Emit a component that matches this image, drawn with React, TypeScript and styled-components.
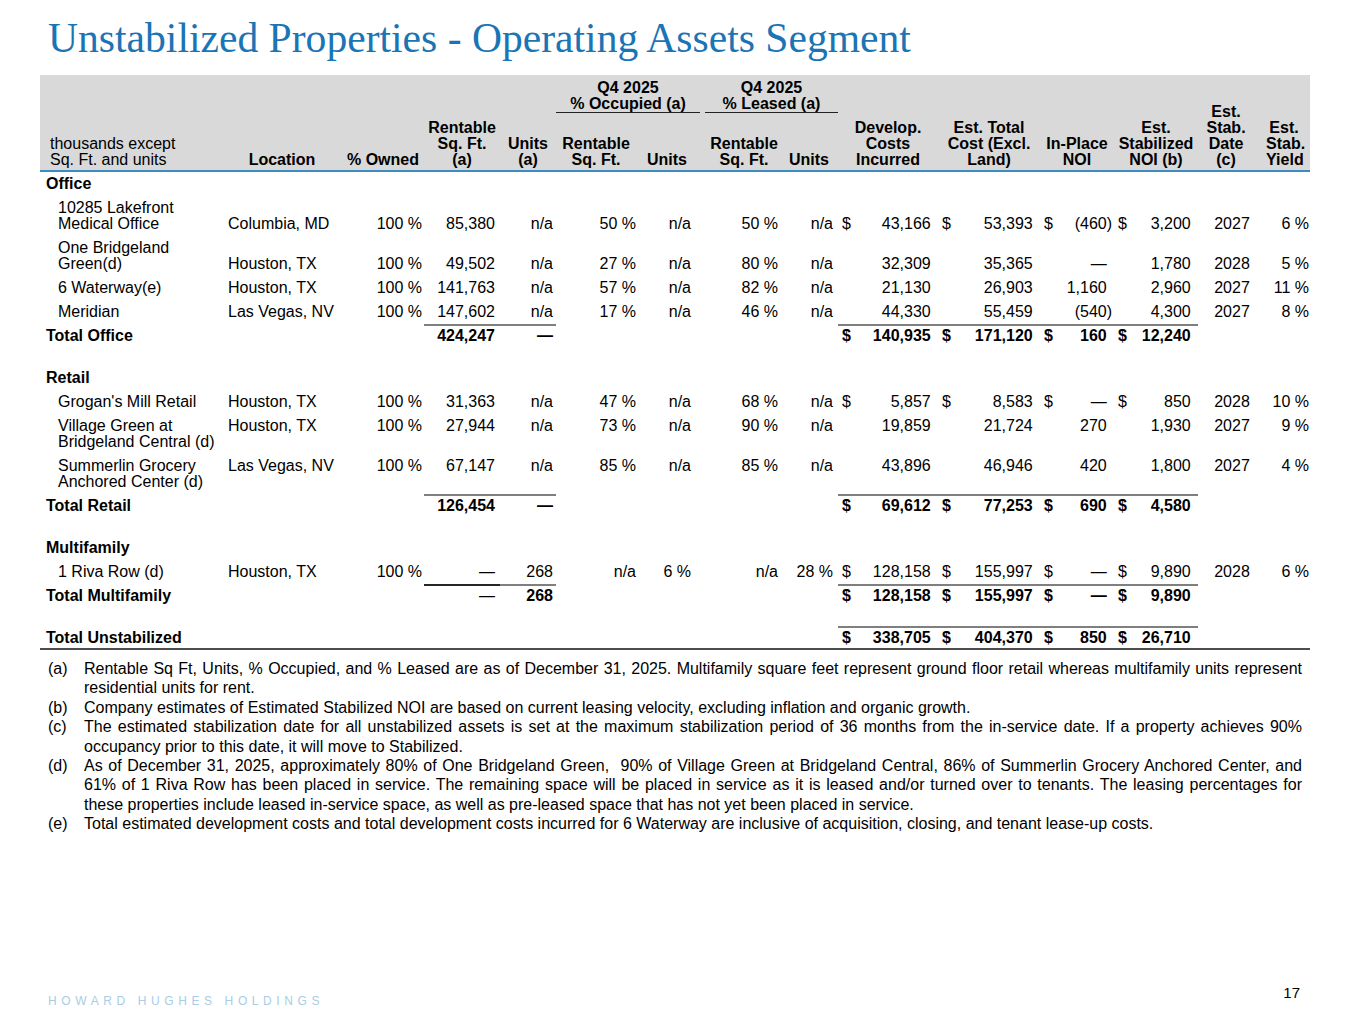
import React from "react";
import styled, { createGlobalStyle } from "styled-components";

const GlobalStyle = createGlobalStyle`
  html, body { margin: 0; padding: 0; background: #ffffff; }
  body { font-family: "Liberation Sans", Arial, sans-serif; color: #000; }
`;

const Page = styled.div`
  width: 1365px;
  height: 1024px;
  display: flex;
  flex-direction: column;
  box-sizing: border-box;
  overflow: hidden;
`;

const Title = styled.h1`
  margin: 0;
  padding: 14px 0 0 48px;
  font-family: "Liberation Serif", "Times New Roman", serif;
  font-weight: 400;
  font-size: 41.6px;
  line-height: 48px;
  color: #1b74b4;
  white-space: nowrap;
`;

const TableArea = styled.div`
  padding: 13px 0 0 40px;
`;

const Table = styled.table`
  width: 1270px;
  table-layout: fixed;
  border-collapse: separate;
  border-spacing: 0;
  font-size: 16px;
  line-height: 16px;
`;

const HeadRow = styled.tr<{ $h: number }>`
  height: ${(p) => p.$h}px;
`;

const Th = styled.th<{ $align?: string; $pl?: number; $pr?: number; $normal?: boolean; $pt?: number }>`
  background: #d9d9d9;
  font-weight: ${(p) => (p.$normal ? 400 : 700)};
  text-align: ${(p) => p.$align ?? "center"};
  vertical-align: bottom;
  padding: ${(p) => p.$pt ?? 0}px ${(p) => p.$pr ?? 0}px 4px ${(p) => p.$pl ?? 0}px;
  box-shadow: inset 0 -2px 0 #3a8cc3;
  white-space: nowrap;
`;

const GroupTh = styled.th`
  background: #d9d9d9;
  font-weight: 700;
  text-align: center;
  vertical-align: top;
  padding: 5px 0 1px;
  white-space: nowrap;
`;

const GroupLabel = styled.div<{ $ml: number }>`
  border-bottom: 1px solid #222;
  margin: 0 0 0 ${(p) => p.$ml}px;
`;

type Rule = "gray" | "dark" | undefined;

const Td = styled.td<{
  $align?: "left" | "right" | "center";
  $pl?: number;
  $pr?: number;
  $bold?: boolean;
  $valign?: "top" | "bottom";
  $top?: Rule;
  $bottom?: boolean;
  $wrap?: boolean;
}>`
  padding: 4px ${(p) => p.$pr ?? 0}px 4px ${(p) => p.$pl ?? 0}px;
  text-align: ${(p) => p.$align ?? "right"};
  vertical-align: ${(p) => p.$valign ?? "bottom"};
  font-weight: ${(p) => (p.$bold ? 700 : 400)};
  white-space: ${(p) => (p.$wrap ? "normal" : "nowrap")};
  box-shadow: ${(p) => {
    const s: string[] = [];
    if (p.$top === "gray") s.push("inset 0 2px 0 #7f7f7f");
    if (p.$top === "dark") s.push("inset 0 2px 0 #262626");
    if (p.$bottom) s.push("inset 0 -2px 0 #4d4d4d");
    return s.length ? s.join(", ") : "none";
  }};
`;

const SpacerRow = styled.tr`
  height: 18px;
`;

const Money = styled.div`
  display: flex;
  justify-content: space-between;
  padding: 0 2px 0 4px;
`;

const Ghost = styled.span`
  visibility: hidden;
`;

const Notes = styled.div`
  margin: 9px 63px 0 48px;
  font-size: 16px;
  line-height: 19.4px;
`;

const Note = styled.div`
  display: grid;
  grid-template-columns: 36px 1fr;
`;

const NoteText = styled.div`
  text-align: justify;
`;

const Footer = styled.footer`
  margin-top: auto;
  display: flex;
  justify-content: space-between;
  align-items: flex-start;
  padding: 0 65px 16px 48px;
`;

const Brand = styled.div`
  padding-top: 9px;
  font-size: 12px;
  line-height: 14px;
  letter-spacing: 4.6px;
  color: #a9cde3;
`;

const PageNum = styled.div`
  font-size: 15px;
  line-height: 16px;
`;

const colWidths = [184, 116, 84, 76, 56, 86, 58, 84, 54, 100, 102, 74, 84, 68, 44];
// right padding for cols 3..9 (index 2..8)
const numPad = [2, 5, 3, 6, 9, 6, 5];

type Item = {
  name: string;
  loc: string;
  nums: string[];
  money: string[];
  dollar?: boolean;
  date: string;
  yld: string;
};

type Total = {
  name: string;
  sqft?: string;
  units?: string;
  sqftRule?: Rule;
  unitsRule?: Rule;
  moneyRule?: boolean;
  sqftBold?: boolean;
  money: string[];
  bottom?: boolean;
};

type Section = {
  title: string;
  valign: "top" | "bottom";
  items: Item[];
  total: Total;
};

const sections: Section[] = [
  {
    title: "Office",
    valign: "bottom",
    items: [
      {
        name: "10285 Lakefront Medical Office",
        loc: "Columbia, MD",
        nums: ["100 %", "85,380", "n/a", "50 %", "n/a", "50 %", "n/a"],
        money: ["43,166", "53,393", "(460)", "3,200"],
        dollar: true,
        date: "2027",
        yld: "6 %",
      },
      {
        name: "One Bridgeland Green(d)",
        loc: "Houston, TX",
        nums: ["100 %", "49,502", "n/a", "27 %", "n/a", "80 %", "n/a"],
        money: ["32,309", "35,365", "\u2014", "1,780"],
        date: "2028",
        yld: "5 %",
      },
      {
        name: "6 Waterway(e)",
        loc: "Houston, TX",
        nums: ["100 %", "141,763", "n/a", "57 %", "n/a", "82 %", "n/a"],
        money: ["21,130", "26,903", "1,160", "2,960"],
        date: "2027",
        yld: "11 %",
      },
      {
        name: "Meridian",
        loc: "Las Vegas, NV",
        nums: ["100 %", "147,602", "n/a", "17 %", "n/a", "46 %", "n/a"],
        money: ["44,330", "55,459", "(540)", "4,300"],
        date: "2027",
        yld: "8 %",
      },
    ],
    total: {
      name: "Total Office",
      sqft: "424,247",
      units: "\u2014",
      sqftRule: "gray",
      unitsRule: "gray",
      moneyRule: true,
      sqftBold: true,
      money: ["140,935", "171,120", "160", "12,240"],
    },
  },
  {
    title: "Retail",
    valign: "top",
    items: [
      {
        name: "Grogan's Mill Retail",
        loc: "Houston, TX",
        nums: ["100 %", "31,363", "n/a", "47 %", "n/a", "68 %", "n/a"],
        money: ["5,857", "8,583", "\u2014", "850"],
        dollar: true,
        date: "2028",
        yld: "10 %",
      },
      {
        name: "Village Green at Bridgeland Central (d)",
        loc: "Houston, TX",
        nums: ["100 %", "27,944", "n/a", "73 %", "n/a", "90 %", "n/a"],
        money: ["19,859", "21,724", "270", "1,930"],
        date: "2027",
        yld: "9 %",
      },
      {
        name: "Summerlin Grocery Anchored Center (d)",
        loc: "Las Vegas, NV",
        nums: ["100 %", "67,147", "n/a", "85 %", "n/a", "85 %", "n/a"],
        money: ["43,896", "46,946", "420", "1,800"],
        date: "2027",
        yld: "4 %",
      },
    ],
    total: {
      name: "Total Retail",
      sqft: "126,454",
      units: "\u2014",
      sqftRule: "gray",
      unitsRule: "gray",
      moneyRule: true,
      sqftBold: true,
      money: ["69,612", "77,253", "690", "4,580"],
    },
  },
  {
    title: "Multifamily",
    valign: "bottom",
    items: [
      {
        name: "1 Riva Row (d)",
        loc: "Houston, TX",
        nums: ["100 %", "\u2014", "268", "n/a", "6 %", "n/a", "28 %"],
        money: ["128,158", "155,997", "\u2014", "9,890"],
        dollar: true,
        date: "2028",
        yld: "6 %",
      },
    ],
    total: {
      name: "Total Multifamily",
      sqft: "\u2014",
      units: "268",
      sqftRule: "dark",
      unitsRule: "gray",
      moneyRule: true,
      sqftBold: false,
      money: ["128,158", "155,997", "\u2014", "9,890"],
    },
  },
];

const grandTotal: Total = {
  name: "Total Unstabilized",
  moneyRule: true,
  money: ["338,705", "404,370", "850", "26,710"],
  bottom: true,
};

const MoneyValue: React.FC<{ value: string; dollar?: boolean }> = ({ value, dollar }) => (
  <Money>
    <span>{dollar ? "$" : ""}</span>
    <span>
      {value}
      {value.endsWith(")") ? null : <Ghost>)</Ghost>}
    </span>
  </Money>
);

const ItemRow: React.FC<{ item: Item; valign: "top" | "bottom" }> = ({ item, valign }) => (
  <tr>
    <Td $align="left" $pl={18} $pr={6} $wrap $valign={valign}>
      {item.name}
    </Td>
    <Td $align="left" $pl={4} $valign={valign}>
      {item.loc}
    </Td>
    {item.nums.map((n, i) => (
      <Td key={i} $pr={numPad[i]} $valign={valign}>
        {n}
      </Td>
    ))}
    {item.money.map((m, i) => (
      <Td key={`m${i}`} $valign={valign}>
        <MoneyValue value={m} dollar={item.dollar} />
      </Td>
    ))}
    <Td $align="center" $valign={valign}>
      {item.date}
    </Td>
    <Td $pr={1} $valign={valign}>
      {item.yld}
    </Td>
  </tr>
);

const TotalRow: React.FC<{ total: Total }> = ({ total }) => (
  <tr>
    <Td $align="left" $pl={6} $bold $bottom={total.bottom}>
      {total.name}
    </Td>
    <Td $bottom={total.bottom} />
    <Td $bottom={total.bottom} />
    <Td $pr={numPad[1]} $bold={total.sqftBold} $top={total.sqftRule} $bottom={total.bottom}>
      {total.sqft ?? ""}
    </Td>
    <Td $pr={numPad[2]} $bold $top={total.unitsRule} $bottom={total.bottom}>
      {total.units ?? ""}
    </Td>
    <Td $bottom={total.bottom} />
    <Td $bottom={total.bottom} />
    <Td $bottom={total.bottom} />
    <Td $bottom={total.bottom} />
    {total.money.map((m, i) => (
      <Td key={i} $bold $top={total.moneyRule ? "gray" : undefined} $bottom={total.bottom}>
        <MoneyValue value={m} dollar />
      </Td>
    ))}
    <Td $bottom={total.bottom} />
    <Td $bottom={total.bottom} />
  </tr>
);

const SectionRow: React.FC<{ title: string }> = ({ title }) => (
  <tr>
    <Td $align="left" $pl={6} $bold colSpan={15}>
      {title}
    </Td>
  </tr>
);

const notes: [string, string][] = [
  [
    "(a)",
    "Rentable Sq Ft, Units, % Occupied, and % Leased are as of December 31, 2025. Multifamily square feet represent ground floor retail whereas multifamily units represent residential units for rent.",
  ],
  [
    "(b)",
    "Company estimates of Estimated Stabilized NOI are based on current leasing velocity, excluding inflation and organic growth.",
  ],
  [
    "(c)",
    "The estimated stabilization date for all unstabilized assets is set at the maximum stabilization period of 36 months from the in-service date. If a property achieves 90% occupancy prior to this date, it will move to Stabilized.",
  ],
  [
    "(d)",
    "As of December 31, 2025, approximately 80% of One Bridgeland Green,\u00a0 90% of Village Green at Bridgeland Central, 86% of Summerlin Grocery Anchored Center, and 61% of 1 Riva Row has been placed in service. The remaining space will be placed in service as it is leased and/or turned over to tenants. The leasing percentages for these properties include leased in-service space, as well as pre-leased space that has not yet been placed in service.",
  ],
  [
    "(e)",
    "Total estimated development costs and total development costs incurred for 6 Waterway are inclusive of acquisition, closing, and tenant lease-up costs.",
  ],
];

export default function App() {
  return (
    <Page>
      <GlobalStyle />
      <Title>Unstabilized Properties - Operating Assets Segment</Title>
      <TableArea>
        <Table>
          <colgroup>
            {colWidths.map((w, i) => (
              <col key={i} style={{ width: w }} />
            ))}
          </colgroup>
          <thead>
            <HeadRow $h={39}>
              <Th rowSpan={2} $align="left" $pl={10} $normal>
                thousands except
                <br />
                Sq. Ft. and units
              </Th>
              <Th rowSpan={2}>Location</Th>
              <Th rowSpan={2} $pl={2}>
                % Owned
              </Th>
              <Th rowSpan={2}>
                Rentable
                <br />
                Sq. Ft.
                <br />
                (a)
              </Th>
              <Th rowSpan={2}>
                Units
                <br />
                (a)
              </Th>
              <GroupTh colSpan={2}>
                <GroupLabel $ml={0}>
                  Q4 2025
                  <br />% Occupied (a)
                </GroupLabel>
              </GroupTh>
              <GroupTh colSpan={2}>
                <GroupLabel $ml={5}>
                  Q4 2025
                  <br />% Leased (a)
                </GroupLabel>
              </GroupTh>
              <Th rowSpan={2}>
                Develop.
                <br />
                Costs
                <br />
                Incurred
              </Th>
              <Th rowSpan={2}>
                Est. Total
                <br />
                Cost (Excl.
                <br />
                Land)
              </Th>
              <Th rowSpan={2}>
                In-Place
                <br />
                NOI
              </Th>
              <Th rowSpan={2}>
                Est.
                <br />
                Stabilized
                <br />
                NOI (b)
              </Th>
              <Th rowSpan={2} $pr={12}>
                Est.
                <br />
                Stab.
                <br />
                Date
                <br />
                (c)
              </Th>
              <Th rowSpan={2} $pr={8}>
                Est.
                <br />
                Stab.
                <br />
                Yield
              </Th>
            </HeadRow>
            <HeadRow $h={58}>
              <Th $pt={6} $pr={6}>
                Rentable
                <br />
                Sq. Ft.
              </Th>
              <Th $pt={6} $pr={8}>
                Units
              </Th>
              <Th $pt={6} $pl={4}>
                Rentable
                <br />
                Sq. Ft.
              </Th>
              <Th $pt={6} $pr={4}>
                Units
              </Th>
            </HeadRow>
          </thead>
          <tbody>
            {sections.map((s, si) => (
              <React.Fragment key={s.title}>
                {si > 0 && (
                  <SpacerRow>
                    <td colSpan={15} />
                  </SpacerRow>
                )}
                <SectionRow title={s.title} />
                {s.items.map((it) => (
                  <ItemRow key={it.name} item={it} valign={s.valign} />
                ))}
                <TotalRow total={s.total} />
              </React.Fragment>
            ))}
            <SpacerRow>
              <td colSpan={15} />
            </SpacerRow>
            <TotalRow total={grandTotal} />
          </tbody>
        </Table>
      </TableArea>
      <Notes>
        {notes.map(([label, text]) => (
          <Note key={label}>
            <span>{label}</span>
            <NoteText>{text}</NoteText>
          </Note>
        ))}
      </Notes>
      <Footer>
        <Brand>HOWARD HUGHES HOLDINGS</Brand>
        <PageNum>17</PageNum>
      </Footer>
    </Page>
  );
}
